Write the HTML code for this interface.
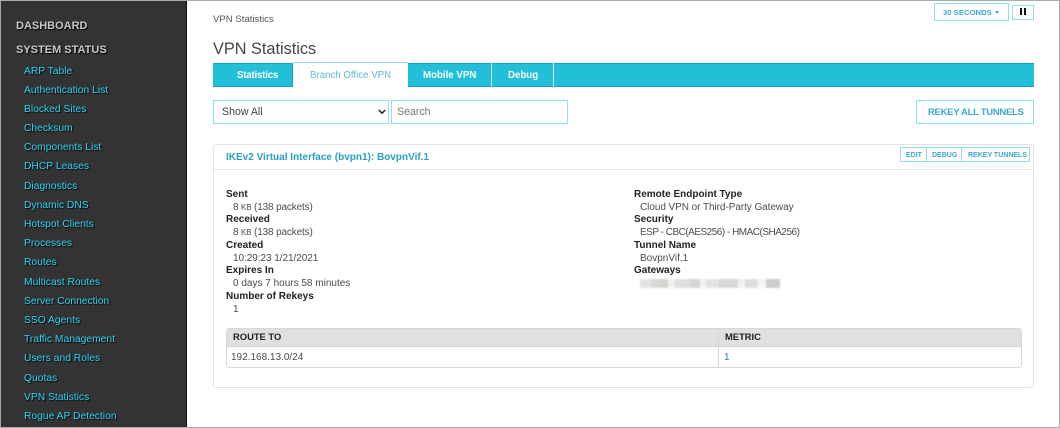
<!DOCTYPE html>
<html><head><meta charset="utf-8"><style>
html,body{margin:0;padding:0;background:#fff}
#p{position:relative;width:1060px;height:428px;overflow:hidden;background:#fff;font-family:"Liberation Sans",sans-serif;font-size:10px;color:#444}
#p div{position:absolute;white-space:nowrap;box-sizing:border-box}
.s{left:24px;color:#2fd6f8;font-size:10.3px;line-height:14px;text-shadow:1px 1px 1px #000;margin-top:1.6px}
.h{left:16px;color:#c8c8c8;font-weight:bold;font-size:11px;line-height:16px;text-shadow:1px 1px 1px #000;margin-top:1px}
.tab{top:64px;height:24px;color:#fff;font-weight:bold;font-size:9.7px;line-height:23px}
.b{left:226px;color:#222;font-weight:bold;font-size:10px;line-height:13px;margin-top:1px}
.v{left:233px;color:#4c4c4c;font-size:10px;line-height:13px;margin-top:1px}
.b2{left:634px;color:#222;font-weight:bold;font-size:10px;line-height:13px;margin-top:1px}
.v2{left:640px;color:#4c4c4c;font-size:10px;line-height:13px;margin-top:1px}
.k{font-size:8px}
.m{top:148px;height:15px;color:#3aa9cc;font-size:7px;font-weight:bold;line-height:15px}
</style></head><body><div id="p">
<div style="left:0;top:0;width:1060px;height:1px;background:#aaa"></div>
<div style="left:0;top:427px;width:1060px;height:1px;background:#aaa"></div>
<div style="left:1059px;top:0;width:1px;height:428px;background:#aaa"></div>
<div style="left:0;top:1px;width:187px;height:426px;background:#333;border-left:1px solid #aaa;border-right:1px solid #111"></div>
<div class="h" style="top:17px">DASHBOARD</div>
<div class="h" style="top:41px">SYSTEM STATUS</div>
<div class="s" style="top:63px">ARP Table</div>
<div class="s" style="top:82px">Authentication List</div>
<div class="s" style="top:101px">Blocked Sites</div>
<div class="s" style="top:120px">Checksum</div>
<div class="s" style="top:139px">Components List</div>
<div class="s" style="top:158px">DHCP Leases</div>
<div class="s" style="top:178px">Diagnostics</div>
<div class="s" style="top:197px">Dynamic DNS</div>
<div class="s" style="top:216px">Hotspot Clients</div>
<div class="s" style="top:235px">Processes</div>
<div class="s" style="top:254px">Routes</div>
<div class="s" style="top:274px">Multicast Routes</div>
<div class="s" style="top:293px">Server Connection</div>
<div class="s" style="top:312px">SSO Agents</div>
<div class="s" style="top:331px">Traffic Management</div>
<div class="s" style="top:350px">Users and Roles</div>
<div class="s" style="top:370px">Quotas</div>
<div class="s" style="top:389px">VPN Statistics</div>
<div class="s" style="top:408px">Rogue AP Detection</div>

<div style="left:213px;top:13px;font-size:9.6px;line-height:14px;color:#555">VPN Statistics</div>
<div style="left:213px;top:39px;font-size:16.3px;line-height:21px;color:#444">VPN Statistics</div>

<div style="left:934px;top:3px;width:75px;height:18px;border:1px solid #8fe0ef;color:#3aa9cc;font-weight:bold;font-size:7.7px;line-height:17px;padding-left:8px">30 SECONDS</div>
<div style="left:995px;top:11px;width:0;height:0;border:2.5px solid transparent;border-top:3px solid #3aa9cc;border-bottom:0"></div>
<div style="left:1012px;top:5px;width:22px;height:15px;border:1px solid #8fe0ef"></div>
<div style="left:1020px;top:8px;width:2px;height:7px;background:#111"></div>
<div style="left:1024px;top:8px;width:2px;height:7px;background:#111"></div>

<div style="left:213px;top:63px;width:821px;height:24px;background:#22bfd9;border-top:1px solid #1a9fc4;border-bottom:1px solid #1a9fc4"></div>
<div style="left:292px;top:63px;width:1px;height:24px;background:#1a9fc4"></div>
<div class="tab" style="left:237px;letter-spacing:-.2px">Statistics</div>
<div style="left:293px;top:62px;width:115px;height:26px;background:#fff;border-top:1px solid #9adcea"></div>
<div style="left:310px;top:64px;line-height:23px;height:24px;color:#5fb7d4;font-size:9.7px">Branch Office VPN</div>
<div class="tab" style="left:423px">Mobile VPN</div>
<div style="left:491px;top:63px;width:1px;height:24px;background:#e6f8fb"></div>
<div class="tab" style="left:508px">Debug</div>
<div style="left:553px;top:63px;width:1px;height:24px;background:#e6f8fb"></div>

<div style="left:213px;top:100px;width:176px;height:24px;border:1px solid #8fe0ef;color:#444;font-size:10.6px;line-height:23px;padding-left:8px">Show All</div>
<svg style="position:absolute;left:378px;top:109px" width="8" height="6"><path d="M.8 1 L4 4.2 L7.2 1" fill="none" stroke="#222" stroke-width="1.5"/></svg>
<div style="left:391px;top:100px;width:177px;height:24px;border:1px solid #8fe0ef;color:#777;font-size:10.6px;line-height:23px;padding-left:5px">Search</div>
<div style="left:916px;top:100px;width:118px;height:24px;border:1px solid #8fe0ef;color:#3aa9cc;font-weight:bold;font-size:9.5px;line-height:23px;letter-spacing:-.3px;padding-left:11px">REKEY ALL TUNNELS</div>

<div style="left:213px;top:144px;width:821px;height:244px;border:1px solid #e2e2e2;border-radius:3px"></div>
<div style="left:214px;top:169px;width:819px;height:1px;background:#e8e8e8"></div>
<div style="left:226px;top:150px;color:#2a9fc4;font-weight:bold;font-size:10px;line-height:14px;margin-top:.6px">IKEv2 Virtual Interface (bvpn1): BovpnVif.1</div>
<div style="left:900px;top:147px;width:130px;height:15px;border:1px solid #8fe0ef"></div>
<div style="left:926px;top:147px;width:1px;height:15px;background:#8fe0ef"></div>
<div style="left:961px;top:147px;width:1px;height:15px;background:#8fe0ef"></div>
<div class="m" style="left:906px">EDIT</div>
<div class="m" style="left:932px">DEBUG</div>
<div class="m" style="left:968px">REKEY TUNNELS</div>

<div class="b" style="top:187px">Sent</div>
<div class="v" style="top:200px;letter-spacing:-.15px">8 <span class="k">KB</span> (138 packets)</div>
<div class="b" style="top:212px">Received</div>
<div class="v" style="top:225px;letter-spacing:-.15px">8 <span class="k">KB</span> (138 packets)</div>
<div class="b" style="top:238px">Created</div>
<div class="v" style="top:251px;letter-spacing:-.05px">10:29:23 1/21/2021</div>
<div class="b" style="top:263px">Expires In</div>
<div class="v" style="top:276px">0 days 7 hours 58 minutes</div>
<div class="b" style="top:289px">Number of Rekeys</div>
<div class="v" style="top:302px">1</div>

<div class="b2" style="top:187px">Remote Endpoint Type</div>
<div class="v2" style="top:200px;letter-spacing:-.06px">Cloud VPN or Third-Party Gateway</div>
<div class="b2" style="top:212px">Security</div>
<div class="v2" style="top:225px;letter-spacing:-.5px">ESP - CBC(AES256) - HMAC(SHA256)</div>
<div class="b2" style="top:238px">Tunnel Name</div>
<div class="v2" style="top:251px">BovpnVif.1</div>
<div class="b2" style="top:263px">Gateways</div>
<div style="left:640px;top:279px;width:140px;height:9px;filter:blur(.7px);background:linear-gradient(90deg,#e4e4e4 0 8%,#d8d8d8 8% 14%,#d6d2ce 14% 20%,#f0f0f0 20% 25%,#e0e0e0 25% 36%,#d6d6d6 36% 43%,#f2f2f2 43% 47%,#e4e4e4 47% 56%,#d8d8d8 56% 70%,#f0f0f0 70% 75%,#dedede 75% 84%,#f4f4f4 84% 90%,#cccccc 90% 100%)"></div>

<div style="left:226px;top:328px;width:796px;height:40px;border:1px solid #d8d8d8;border-radius:3px"></div>
<div style="left:227px;top:329px;width:794px;height:18px;background:#e0e0e0;border-bottom:1px solid #d0d0d0"></div>
<div style="left:718px;top:347px;width:1px;height:20px;background:#d4d4d4"></div>
<div style="left:718px;top:329px;width:1px;height:18px;background:#d8d8d8"></div>
<div style="left:233px;top:330px;color:#222;font-weight:bold;font-size:9.4px;line-height:13px">ROUTE TO</div>
<div style="left:725px;top:330px;color:#222;font-weight:bold;font-size:9.4px;line-height:13px">METRIC</div>
<div style="left:231px;top:351px;color:#4c4c4c;font-size:10px;line-height:14px">192.168.13.0/24</div>
<div style="left:724px;top:351px;color:#2a7fb0;font-size:10px;line-height:14px">1</div>
</div></body></html>
